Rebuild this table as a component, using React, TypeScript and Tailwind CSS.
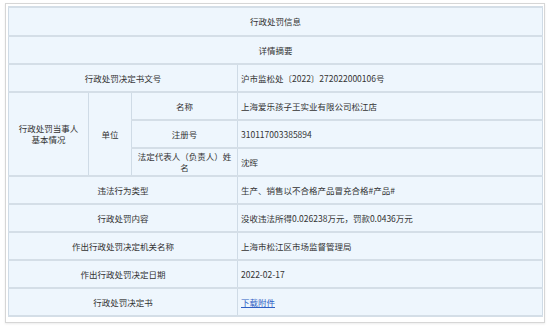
import React from 'react';

const font = { fontFamily: '"Noto Sans CJK SC", "Noto Sans", sans-serif' };

const rows: { label: string; value: React.ReactNode }[] = [
  { label: '违法行为类型', value: '生产、销售以不合格产品冒充合格#产品#' },
  { label: '行政处罚内容', value: '没收违法所得0.026238万元，罚款0.0436万元' },
  { label: '作出行政处罚决定机关名称', value: '上海市松江区市场监督管理局' },
  { label: '作出行政处罚决定日期', value: '2022-02-17' },
  {
    label: '行政处罚决定书',
    value: <a className="text-[#2f5fc4] underline">下载附件</a>,
  },
];

const cell = 'border-x border-x-[#cfdbe6] border-y-2 border-y-[#d4dee7] bg-[#eef6fd]';

export default function App() {
  return (
    <div className="w-[550px] h-[329px] bg-white pt-[3px] pl-[5px]" style={font}>
      <div className="w-[540px] h-[320px] border border-[#d6d6d6] pt-[2px] pl-[2px] shadow-[0_1px_2px_rgba(0,0,0,0.08)]">
        <table className="w-[535px] border-collapse table-fixed text-[8.5px] leading-[11px] text-[#333]">
          <colgroup>
            <col className="w-[80px]" />
            <col className="w-[43px]" />
            <col className="w-[106px]" />
            <col />
          </colgroup>
          <tbody>
            <tr className="h-[29px]">
              <td colSpan={4} className={`${cell} text-center`}>行政处罚信息</td>
            </tr>
            <tr className="h-[28px]">
              <td colSpan={4} className={`${cell} text-center`}>详情摘要</td>
            </tr>
            <tr className="h-[28px]">
              <td colSpan={3} className={`${cell} text-center`}>行政处罚决定书文号</td>
              <td className={`${cell} pl-[3px]`}>沪市监松处〔2022〕272022000106号</td>
            </tr>
            <tr className="h-[28px]">
              <td rowSpan={3} className={`${cell} text-center`}>
                行政处罚当事人
                <br />
                基本情况
              </td>
              <td rowSpan={3} className={`${cell} text-center`}>单位</td>
              <td className={`${cell} text-center`}>名称</td>
              <td className={`${cell} pl-[3px]`}>上海爱乐孩子王实业有限公司松江店</td>
            </tr>
            <tr className="h-[28px]">
              <td className={`${cell} text-center`}>注册号</td>
              <td className={`${cell} pl-[3px]`}>310117003385894</td>
            </tr>
            <tr className="h-[28px]">
              <td className={`${cell} text-center px-[2px]`}>法定代表人（负责人）姓名</td>
              <td className={`${cell} pl-[3px]`}>沈晖</td>
            </tr>
            {rows.map(r => (
              <tr key={r.label} className="h-[28px]">
                <td colSpan={3} className={`${cell} text-center`}>{r.label}</td>
                <td className={`${cell} pl-[3px]`}>{r.value}</td>
              </tr>
            ))}
          </tbody>
        </table>
      </div>
    </div>
  );
}
